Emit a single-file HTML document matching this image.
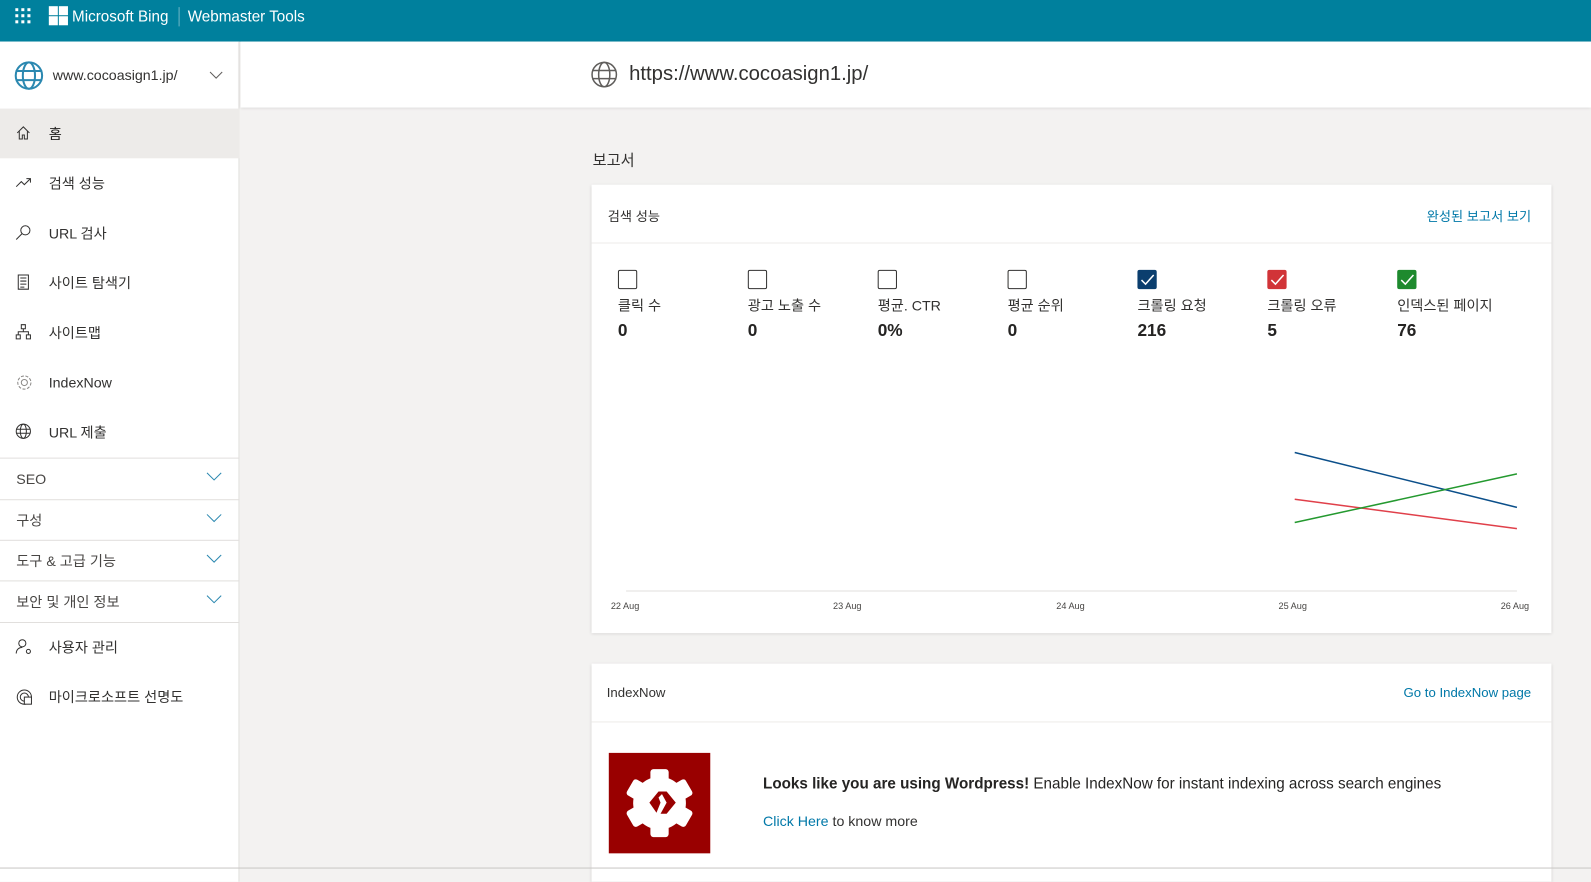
<!DOCTYPE html>
<html><head><meta charset="utf-8"><style>
*{margin:0;padding:0;box-sizing:border-box}
body{width:1591px;height:869px;overflow:hidden;background:#f3f2f1;font-family:"Liberation Sans","Noto Sans CJK KR",sans-serif;color:#323130;position:relative}
#w{position:absolute;left:0;top:0;width:1568px;height:857px;transform:scale(1.01467);transform-origin:0 0}
.a{position:absolute}
.top{left:0;top:0;width:1568px;height:41px;background:#00809d;color:#fff}
.side{left:0;top:41px;width:236px;height:828px;background:#fff;border-right:1px solid #e1dfdd}
.item{position:absolute;left:0;width:236px;height:49px;font-size:14px;display:flex;align-items:center}
.item .ic{position:absolute;left:15px;top:16px}
.item span{position:absolute;left:48px}
.grp{position:absolute;left:0;width:236px;height:40px;border-top:1px solid #e1dfdd;font-size:14px;color:#484644;display:flex;align-items:center;padding-left:16px}
.chev{position:absolute;right:17px;top:13px}
.card{background:#fff;box-shadow:0 1px 3px rgba(0,0,0,.15)}
.m{position:absolute;top:266px;font-size:14px;color:#323130}
.m .cb{width:19px;height:19px;border:1px solid #323130;border-radius:2px;position:absolute;top:0;left:0}
.m .l{position:absolute;top:25px;white-space:nowrap}
.m .v{position:absolute;top:50px;font-size:17px;font-weight:bold;color:#252423}
.xl{position:absolute;top:592px;font-size:9px;color:#484644;white-space:nowrap}
</style></head><body><div id="w">
<div class="a top">
 <svg class="a" style="left:15px;top:8px" width="17" height="17"><g fill="#fff"><rect x="0" y="0" width="3" height="3"/><rect x="6" y="0" width="3" height="3"/><rect x="12" y="0" width="3" height="3"/><rect x="0" y="6" width="3" height="3"/><rect x="6" y="6" width="3" height="3"/><rect x="12" y="6" width="3" height="3"/><rect x="0" y="12" width="3" height="3"/><rect x="6" y="12" width="3" height="3"/><rect x="12" y="12" width="3" height="3"/></g></svg>
 <svg class="a" style="left:48px;top:6px" width="19" height="19"><g fill="#fff"><rect x="0" y="0" width="9" height="9"/><rect x="10" y="0" width="9" height="9"/><rect x="0" y="10" width="9" height="9"/><rect x="10" y="10" width="9" height="9"/></g></svg>
 <div class="a" style="left:71px;top:8px;font-size:15px">Microsoft Bing</div>
 <div class="a" style="left:176px;top:7px;width:1px;height:19px;background:#6fb5c6"></div>
 <div class="a" style="left:185px;top:8px;font-size:15px">Webmaster Tools</div>
</div>
<div class="a side">
 <svg class="a" style="left:14px;top:19px" width="29" height="29" viewBox="0 0 29 29" fill="none" stroke="#2b88b0" stroke-width="2"><circle cx="14.5" cy="14.5" r="13"/><ellipse cx="14.5" cy="14.5" rx="6" ry="13"/><line x1="1.5" y1="10" x2="27.5" y2="10"/><line x1="1.5" y1="19" x2="27.5" y2="19"/></svg>
 <div class="a" style="left:52px;top:25px;font-size:14px">www.cocoasign1.jp/</div>
 <svg class="a" style="left:206px;top:29px" width="14" height="8"><path d="M1 1l6 6 6-6" fill="none" stroke="#605e5c"/></svg>
 <div class="item" style="top:66px;background:#edebe9"><svg class="ic" width="16" height="16"><path d="M2 8L8 2l6 6M4 6v8h3v-4h2v4h3V6" fill="none" stroke="#323130"/></svg><span style="color:#201f1e">홈</span></div>
 <div class="item" style="top:115px"><svg class="ic" width="17" height="16"><path d="M1 12l5-5 3 3 6-6M11 4h4v4" fill="none" stroke="#323130"/></svg><span>검색 성능</span></div>
 <div class="item" style="top:164px"><svg class="ic" width="16" height="16"><circle cx="10" cy="6" r="4.5" fill="none" stroke="#323130"/><path d="M7 9l-6 6" stroke="#323130"/></svg><span>URL 검사</span></div>
 <div class="item" style="top:213px"><svg class="ic" width="16" height="16"><path d="M3 1h10v14H3zM5 4h6M5 7h6M5 10h6M5 13h4" fill="none" stroke="#323130"/></svg><span>사이트 탐색기</span></div>
 <div class="item" style="top:262px"><svg class="ic" width="16" height="16"><path d="M6 1h4v4H6zM1 11h4v4H1zM11 11h4v4h-4zM8 5v3M3 11V8h10v3" fill="none" stroke="#323130"/></svg><span>사이트맵</span></div>
 <div class="item" style="top:311px"><svg class="ic" width="18" height="18"><circle cx="9" cy="9" r="6.5" fill="none" stroke="#8a8886" stroke-dasharray="3 1.5"/><circle cx="9" cy="9" r="3" fill="none" stroke="#8a8886"/></svg><span>IndexNow</span></div>
 <div class="item" style="top:360px"><svg class="ic" width="17" height="17"><circle cx="8" cy="8" r="7" fill="none" stroke="#323130"/><ellipse cx="8" cy="8" rx="3" ry="7" fill="none" stroke="#323130"/><path d="M1 6h14M1 10h14" stroke="#323130"/></svg><span>URL 제출</span></div>
 <div class="grp" style="top:410px">SEO<svg class="chev" width="16" height="9"><path d="M1 1l7 7 7-7" fill="none" stroke="#2b88b0"/></svg></div>
 <div class="grp" style="top:451px">구성<svg class="chev" width="16" height="9"><path d="M1 1l7 7 7-7" fill="none" stroke="#2b88b0"/></svg></div>
 <div class="grp" style="top:491px">도구 &amp; 고급 기능<svg class="chev" width="16" height="9"><path d="M1 1l7 7 7-7" fill="none" stroke="#2b88b0"/></svg></div>
 <div class="grp" style="top:531px">보안 및 개인 정보<svg class="chev" width="16" height="9"><path d="M1 1l7 7 7-7" fill="none" stroke="#2b88b0"/></svg></div>
 <div class="a" style="left:0;top:572px;width:236px;border-top:1px solid #e1dfdd"></div>
 <div class="item" style="top:572px"><svg class="ic" width="18" height="17"><circle cx="7" cy="5" r="3.5" fill="none" stroke="#323130"/><path d="M1 15c0-4 3-6 6-6" fill="none" stroke="#323130"/><circle cx="13" cy="13" r="2" fill="none" stroke="#323130"/></svg><span>사용자 관리</span></div>
 <div class="item" style="top:621px"><svg class="ic" width="18" height="18"><circle cx="9" cy="9" r="7" fill="none" stroke="#323130"/><circle cx="9" cy="9" r="4" fill="none" stroke="#323130"/><rect x="9" y="9" width="7" height="7" fill="#fff" stroke="#323130"/></svg><span>마이크로소프트 선명도</span></div>
</div>
<div class="a" style="left:237px;top:41px;width:1331px;height:65px;background:#fff;box-shadow:0 1px 3px rgba(0,0,0,.12)"></div>
<svg class="a" style="left:582px;top:60px" width="27" height="27" viewBox="0 0 27 27" fill="none" stroke="#605e5c" stroke-width="1.5"><circle cx="13.5" cy="13.5" r="12"/><ellipse cx="13.5" cy="13.5" rx="5.5" ry="12"/><line x1="1.5" y1="9.5" x2="25.5" y2="9.5"/><line x1="1.5" y1="17.5" x2="25.5" y2="17.5"/></svg>
<div class="a" style="left:620px;top:62px;font-size:20px;color:#323130">https://www.cocoasign1.jp/</div>
<div class="a" style="left:584px;top:147px;font-size:15px">보고서</div>
<div class="a card" style="left:583px;top:182px;width:946px;height:442px">
 <div class="a" style="left:0;top:57px;width:946px;border-top:1px solid #edebe9"></div>
 <div class="a" style="left:16px;top:21px;font-size:13px">검색 성능</div>
 <div class="a" style="right:20px;top:21px;font-size:13px;color:#0078a8">완성된 보고서 보기</div>
</div>
<div class="m" style="left:609px"><div class="cb"></div><div class="l">클릭 수</div><div class="v">0</div></div>
<div class="m" style="left:737px"><div class="cb"></div><div class="l">광고 노출 수</div><div class="v">0</div></div>
<div class="m" style="left:865px"><div class="cb"></div><div class="l">평균. CTR</div><div class="v">0%</div></div>
<div class="m" style="left:993px"><div class="cb"></div><div class="l">평균 순위</div><div class="v">0</div></div>
<div class="m" style="left:1121px"><div class="cb" style="background:#0b3e6e;border-color:#0b3e6e"><svg width="17" height="17"><path d="M3 9l4 4 8-9" fill="none" stroke="#fff" stroke-width="1.5"/></svg></div><div class="l">크롤링 요청</div><div class="v">216</div></div>
<div class="m" style="left:1249px"><div class="cb" style="background:#d13438;border-color:#d13438"><svg width="17" height="17"><path d="M3 9l4 4 8-9" fill="none" stroke="#fff" stroke-width="1.5"/></svg></div><div class="l">크롤링 오류</div><div class="v">5</div></div>
<div class="m" style="left:1377px"><div class="cb" style="background:#1e8a2e;border-color:#1e8a2e"><svg width="17" height="17"><path d="M3 9l4 4 8-9" fill="none" stroke="#fff" stroke-width="1.5"/></svg></div><div class="l">인덱스된 페이지</div><div class="v">76</div></div>
<svg class="a" style="left:0;top:0" width="1568" height="857"><line x1="617" y1="582.5" x2="1495" y2="582.5" stroke="#e1dfdd"/><line x1="1276" y1="446" x2="1495" y2="500" stroke="#0b4f8a" stroke-width="1.5"/><line x1="1276" y1="492" x2="1495" y2="521" stroke="#e0404a" stroke-width="1.5"/><line x1="1276" y1="515" x2="1495" y2="467" stroke="#24992f" stroke-width="1.5"/></svg>
<div class="xl" style="left:602px">22 Aug</div><div class="xl" style="left:821px">23 Aug</div><div class="xl" style="left:1041px">24 Aug</div><div class="xl" style="left:1260px">25 Aug</div><div class="xl" style="left:1479px">26 Aug</div>
<div class="a card" style="left:583px;top:654px;width:946px;height:215px">
 <div class="a" style="left:0;top:57px;width:946px;border-top:1px solid #edebe9"></div>
 <div class="a" style="left:15px;top:21px;font-size:13px">IndexNow</div>
 <div class="a" style="right:20px;top:21px;font-size:13px;color:#0078a8">Go to IndexNow page</div>
 <div class="a" style="left:17px;top:88px;width:100px;height:99px;background:#990000">
  <svg width="100" height="99" viewBox="0 0 100 99"><g fill="#fff"><circle cx="50" cy="49.5" r="26"/><rect x="41" y="16" width="18" height="67" rx="3"/><rect x="41" y="16" width="18" height="67" rx="3" transform="rotate(60 50 49.5)"/><rect x="41" y="16" width="18" height="67" rx="3" transform="rotate(-60 50 49.5)"/></g><path d="M40 49l9-11h6l-6 6 2 5-4 10zM51 38h6l9 11-9 11h-6l6-11z" fill="#990000"/></svg>
 </div>
 <div class="a" style="left:169px;top:110px;font-size:15px;color:#252423"><b>Looks like you are using Wordpress!</b> Enable IndexNow for instant indexing across search engines</div>
 <div class="a" style="left:169px;top:147px;font-size:14px"><span style="color:#0078a8">Click Here</span> to know more</div>
</div>
<div class="a" style="left:0;top:855px;width:1568px;border-top:1px solid #c8c6c4"></div>
</div></body></html>
